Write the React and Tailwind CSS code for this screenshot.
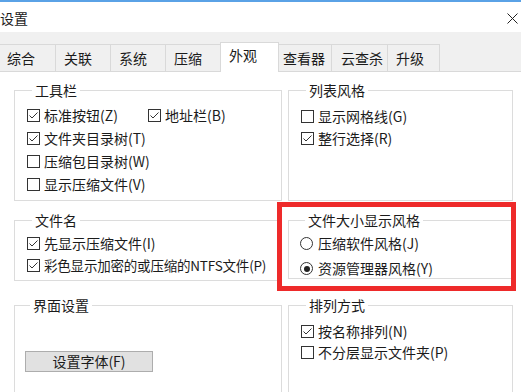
import React from "react";

const Check = ({ checked }) => (
  <span className="w-[13px] h-[13px] border border-[#333] bg-white flex items-center justify-center shrink-0">
    {checked && (
      <svg width="11" height="11" viewBox="0 0 11 11">
        <polyline points="1.5,5.5 4,8 9.5,2.5" fill="none" stroke="#333" strokeWidth="1" />
      </svg>
    )}
  </span>
);

const Radio = ({ checked }) => (
  <span className="w-[13px] h-[13px] rounded-full border border-[#333] bg-white flex items-center justify-center shrink-0">
    {checked && <span className="w-[6px] h-[6px] rounded-full bg-[#222]" />}
  </span>
);

const Item = ({ checked, label, className = "h-[23px]", labelClass = "" }) => (
  <div className={"flex items-center gap-[4px] " + className}>
    <Check checked={checked} />
    <span className={labelClass}>{label}</span>
  </div>
);

const Group = ({ title, className, children }) => (
  <fieldset className={"border border-[#dcdcdc] " + className}>
    <legend className="ml-[5px] px-[3px] leading-[16px]">{title}</legend>
    {children}
  </fieldset>
);

const tabs = [
  { label: "综合", cls: "w-[55px] pl-[7px] border-t" },
  { label: "关联", cls: "w-[55px] pl-[8px] border-t border-l" },
  { label: "系统", cls: "w-[55px] pl-[8px] border-t border-l" },
  { label: "压缩", cls: "w-[55px] pl-[8px] border-t border-l" },
];
const tabsAfter = [
  { label: "查看器", cls: "w-[52px] pl-[4px] border-t" },
  { label: "云查杀", cls: "w-[56px] pl-[9px] border-t border-l" },
  { label: "升级", cls: "w-[53px] pl-[8px] border-t border-l border-r" },
];

export default function App() {
  return (
    <div className="relative w-[521px] h-[392px] overflow-hidden bg-[#f0f0f0] text-[14px] text-[#1b1b1b] font-['Noto_Sans_CJK_SC','Noto_Sans',sans-serif]">
      <div className="h-[2px] bg-[#5aa2e6]" />
      <div className="h-[30px] bg-white flex items-center justify-between pt-[2px] pr-[3px]">
        <span>设置</span>
        <svg width="11" height="11" viewBox="0 0 11 11">
          <path d="M0.5 0.5 L10.5 10.5 M10.5 0.5 L0.5 10.5" stroke="#222" strokeWidth="1" />
        </svg>
      </div>

      <div className="h-[40px] flex items-end border-b border-[#d9d9d9]">
        {tabs.map((t) => (
          <div key={t.label} className={"h-[27px] flex items-center border-[#d9d9d9] bg-[#f0f0f0] " + t.cls}>
            {t.label}
          </div>
        ))}
        <div className="relative z-10 -mb-px h-[30px] w-[59px] pl-[8px] pb-[4px] flex items-center bg-white border border-b-0 border-[#d9d9d9]">
          外观
        </div>
        {tabsAfter.map((t) => (
          <div key={t.label} className={"h-[27px] flex items-center border-[#d9d9d9] bg-[#f0f0f0] " + t.cls}>
            {t.label}
          </div>
        ))}
      </div>

      <div className="bg-white h-full pl-[14px] pt-[10px] flex gap-[6px]">
        <div className="w-[268px] flex flex-col">
          <Group title="工具栏" className="h-[119px] pl-[12px] pt-[6px]">
            <div className="flex">
              <Item checked label="标准按钮(Z)" className="h-[23px] w-[121px]" />
              <Item checked label="地址栏(B)" />
            </div>
            <Item checked label="文件夹目录树(T)" />
            <Item label="压缩包目录树(W)" />
            <Item label="显示压缩文件(V)" />
          </Group>
          <Group title="文件名" className="mt-[11px] h-[69px] pl-[12px] pt-[4px]">
            <Item checked label="先显示压缩文件(I)" className="h-[22px]" />
            <Item
              checked
              label="彩色显示加密的或压缩的NTFS文件(P)"
              className="h-[22px]"
              labelClass="text-[13.5px] tracking-[-0.2px]"
            />
          </Group>
          <Group title="界面设置" className="mt-[16px] h-[120px] pl-[10px]">
            <button className="mt-[38px] w-[128px] h-[21px] bg-[#e1e1e1] border border-[#adadad] flex items-center justify-center">
              设置字体(F)
            </button>
          </Group>
        </div>

        <div className="w-[225px] flex flex-col">
          <Group title="列表风格" className="h-[119px] pl-[12px] pt-[7px]">
            <Item label="显示网格线(G)" className="h-[22px]" />
            <Item checked label="整行选择(R)" className="h-[22px]" />
          </Group>
          <Group title="文件大小显示风格" className="mt-[11px] h-[67px] pl-[11px] pt-[3px]">
            <div className="h-[25px] flex items-center gap-[5px]">
              <Radio />
              <span>压缩软件风格(J)</span>
            </div>
            <div className="h-[25px] flex items-center gap-[5px]">
              <Radio checked />
              <span>资源管理器风格(Y)</span>
            </div>
          </Group>
          <Group title="排列方式" className="mt-[18px] h-[120px] pl-[12px] pt-[8px]">
            <Item checked label="按名称排列(N)" className="h-[21px]" />
            <Item label="不分层显示文件夹(P)" className="h-[21px]" />
          </Group>
        </div>
      </div>

      <div className="absolute left-[277px] top-[202px] w-[239px] h-[89px] border-[5px] border-[#ee2a2a]" />
    </div>
  );
}
